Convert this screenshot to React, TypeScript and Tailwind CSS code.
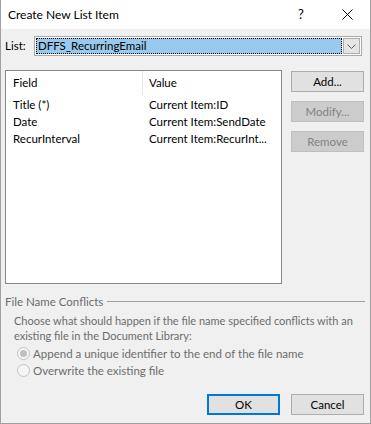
import { useState } from 'react'

const font = { fontFamily: 'Lato, "Noto Sans", sans-serif' }

function Button({ label, disabled, primary }: { label: string; disabled?: boolean; primary?: boolean }) {
  const base = 'w-[73px] h-[21px] flex items-center justify-center text-[11.5px] leading-none'
  if (disabled) {
    return <div className={`${base} bg-[#cccccc] border border-[#bfbfbf] text-[#838383]`}>{label}</div>
  }
  if (primary) {
    return <div className={`${base} bg-[#e1e1e1] border-2 border-[#0078d7] text-black`}>{label}</div>
  }
  return <div className={`${base} bg-[#e1e1e1] border border-[#adadad] text-black`}>{label}</div>
}

function Radio({ checked, label }: { checked?: boolean; label: string }) {
  return (
    <div className="flex items-center h-[17px] gap-[3px]">
      <span className="w-[13px] h-[13px] rounded-full border border-[#c4c4c4] bg-[#f5f5f5] flex items-center justify-center">
        {checked && <span className="w-[7px] h-[7px] rounded-full bg-[#c0c0c0]" />}
      </span>
      <span>{label}</span>
    </div>
  )
}

export default function App() {
  const [rows] = useState([
    ['Title (*)', 'Current Item:ID'],
    ['Date', 'Current Item:SendDate'],
    ['RecurInterval', 'Current Item:RecurInt...'],
  ])

  return (
    <div className="w-[371px] h-[424px] bg-[#f0f0f0] border border-t-0 border-[#a0a0a0] flex flex-col text-[11.5px] text-black whitespace-nowrap" style={font}>
      {/* title bar */}
      <div className="h-[29px] bg-white flex items-center pl-[7px]">
        <span className="text-[12px]">Create New List Item</span>
        <span className="ml-auto w-[46px] text-center text-[13px]">?</span>
        <span className="w-[46px] flex justify-center">
          <svg width="11" height="11" viewBox="0 0 11 11" stroke="black" strokeWidth="1">
            <path d="M0.5 0.5 L10.5 10.5 M10.5 0.5 L0.5 10.5" />
          </svg>
        </span>
      </div>

      {/* list selector */}
      <div className="flex items-center mt-[7px] pl-[4px] h-[20px]">
        <span className="w-[29px]">List:</span>
        <div className="w-[328px] h-[20px] border border-[#a9a9a9] bg-white flex p-[1px]">
          <div className="flex-1 bg-[#99c9ef] border border-dotted border-black flex items-center pl-[1px] leading-none">
            DFFS_RecurringEmail
          </div>
          <div className="w-[17px] ml-[1px] bg-[#e5e5e5] border border-[#acacac] flex items-center justify-center">
            <svg width="9" height="5" viewBox="0 0 9 5" fill="none" stroke="#606060">
              <path d="M0.5 0.5 L4.5 4.5 L8.5 0.5" />
            </svg>
          </div>
        </div>
      </div>

      {/* list view + buttons */}
      <div className="flex mt-[14px] pl-[4px]">
        <div className="w-[277px] h-[214px] bg-white border border-[#828790]">
          <div className="flex h-[24px] items-center">
            <div className="w-[137px] pl-[7px] h-full flex items-center border-r border-[#e5e5e5]">Field</div>
            <div className="pl-[6px]">Value</div>
          </div>
          <div className="pt-[1px]">
            {rows.map(([f, v]) => (
              <div key={f} className="flex h-[17px] items-center">
                <div className="w-[143px] pl-[7px]">{f}</div>
                <div>{v}</div>
              </div>
            ))}
          </div>
        </div>
        <div className="ml-[9px] flex flex-col gap-[9px] pt-[1px]">
          <Button label="Add..." />
          <Button label="Modify..." disabled />
          <Button label="Remove" disabled />
        </div>
      </div>

      {/* file name conflicts */}
      <div className="mt-[9px] pl-[4px] pr-[5px] text-[#6d6d6d]">
        <div className="flex items-center h-[17px]">
          <span>File Name Conflicts</span>
          <span className="flex-1 ml-[4px] h-px bg-[#a0a0a0]" />
        </div>
        <div className="pl-[9px] pt-[3px] leading-[15px] text-[11px]">
          <div>Choose what should happen if the file name specified conflicts with an</div>
          <div>existing file in the Document Library:</div>
        </div>
        <div className="pl-[12px] pt-[2px] leading-none">
          <Radio checked label="Append a unique identifier to the end of the file name" />
          <Radio label="Overwrite the existing file" />
        </div>
      </div>

      {/* footer */}
      <div className="mt-auto mb-[8px] flex justify-end gap-[11px] pr-[6px]">
        <Button label="OK" primary />
        <Button label="Cancel" />
      </div>
    </div>
  )
}
